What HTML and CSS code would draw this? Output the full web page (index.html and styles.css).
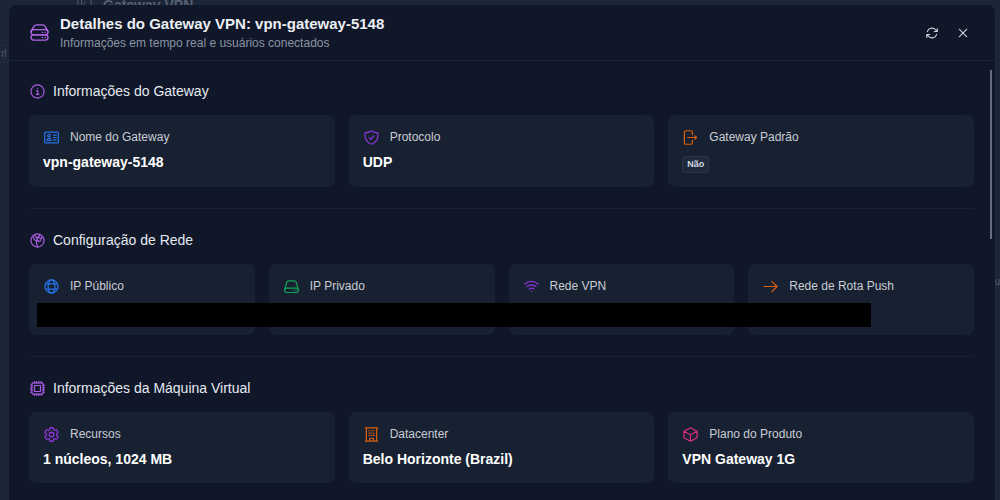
FILE: index.html
```html
<!DOCTYPE html>
<html lang="pt-BR">
<head>
<meta charset="utf-8">
<meta name="viewport" content="width=device-width, initial-scale=1">
<title>Detalhes do Gateway VPN</title>
<link rel="stylesheet" href="styles.css">
</head>
<body>
<div class="backdrop" aria-hidden="true">
  <div class="backdrop-title">
    <svg class="backdrop-icon" viewBox="0 0 16 16"><path d="M1 0v15M5 5v10M9 7l-2 4 3 4M15 0v15"/></svg>
    <span>Gateway VPN</span>
  </div>
  <span class="backdrop-chip">rl</span>
  <span class="backdrop-cell">u</span>
</div>
<main class="modal" role="dialog" aria-labelledby="title">
  <header class="modal-header">
    <svg class="icon brand-icon" viewBox="0 0 20 18"><path d="M1 8.500Q1 7.500 2 6L4 2.700Q5 1 7 1h6q2 0 3 1.700L18 6q1 1.500 1 2.500"/><rect x="1" y="6" width="18" height="5.500" rx="2.700"/><rect x="1" y="11.500" width="18" height="5.500" rx="2.700"/><path d="M13 8.800h.3M16 8.800h.3M13 14.300h.3M16 14.300h.3"/></svg>
    <div class="titles">
      <h1 id="title">Detalhes do Gateway VPN: vpn-gateway-5148</h1>
      <p>Informações em tempo real e usuários conectados</p>
    </div>
    <div class="actions">
      <button type="button" aria-label="Atualizar"><svg class="icon action-icon" viewBox="0 0 24 24"><path d="M16 9.300h5V4.300M3 19.700v-5h5M3 14.700l3.200 3.200a8.300 8.300 0 0 0 13.800-3.700M4 9.800a8.300 8.300 0 0 1 13.800-3.700L21 9.300"/></svg></button>
      <button type="button" aria-label="Fechar"><svg class="icon action-icon" viewBox="0 0 24 24"><path d="M5.500 5.500l13 13M18.500 5.500l-13 13"/></svg></button>
    </div>
  </header>
  <div class="modal-body">
    <section class="section">
      <h2><svg class="icon" viewBox="0 0 16 16"><circle cx="8" cy="8" r="7"/><path d="M7 7.300h1.200v3.800M6.800 11.100h2.700M8 4.800v.3"/></svg>Informações do Gateway</h2>
      <div class="cards">
        <article class="card">
          <h3><svg class="icon blue" viewBox="0 0 16 16"><rect x=".7" y="2.200" width="14.600" height="11.600" rx="1"/><circle cx="5.300" cy="6.100" r="1.400"/><path d="M3.200 11.200q0-2 2.100-2t2.100 2zM10 5.500h3M10 8h3M10 10.500h3"/></svg>Nome do Gateway</h3>
          <p class="value">vpn-gateway-5148</p>
        </article>
        <article class="card">
          <h3><svg class="icon purple" viewBox="0 0 16 16"><path d="M8 .8C6 2.200 3.500 3 1.200 3c-.8 5.500 1.300 10 6.800 12.200 5.500-2.200 7.600-6.700 6.800-12.200C12.500 3 10 2.200 8 .8zM5.600 8.200l1.700 1.700 3.100-3.600"/></svg>Protocolo</h3>
          <p class="value">UDP</p>
        </article>
        <article class="card">
          <h3><svg class="icon orange" viewBox="0 0 16 16"><path d="M10 5V2.200Q10 .8 8.600.8H3Q1.500.8 1.500 2.200v11.600q0 1.400 1.500 1.400h5.600q1.400 0 1.400-1.400V11M5 8h9.500M12.600 6.200L14.500 8l-1.900 1.800"/></svg>Gateway Padrão</h3>
          <p class="badge">Não</p>
        </article>
      </div>
    </section>
    <section class="section">
      <h2><svg class="icon" viewBox="0 0 16 16"><circle cx="8" cy="8" r="7"/><path d="M2.800 3.500l1.700 3.300L7 8.800v2.400l1 3.300M4.700 2.200l2.300 3 1.300-.8M10.300 1.700L9 4.700 7.300 7l1.900 2.200 2.200-1 .5-2.600-2-.4M13.200 4l-1.300 1.600M7 8.800L7.300 7"/></svg>Configuração de Rede</h2>
      <div class="cards">
        <article class="card">
          <h3><svg class="icon blue" viewBox="0 0 16 16"><circle cx="8" cy="8" r="7"/><ellipse cx="8" cy="8" rx="3.600" ry="7"/><path d="M1.800 5.200h12.400M1.800 10.800h12.400"/></svg>IP Público</h3>
        </article>
        <article class="card">
          <h3><svg class="icon green" viewBox="0 0 16 16"><path d="M.8 10.800L3 3.500Q3.500 2 5 2h6q1.500 0 2 1.500l2.200 7.300"/><rect x=".8" y="9.700" width="14.400" height="4.700" rx="2"/><path d="M10.300 12.100h.2M12.700 12.100h.2"/></svg>IP Privado</h3>
        </article>
        <article class="card">
          <h3><svg class="icon purple" viewBox="0 0 16 16"><path d="M.8 5.400q7.200-5.600 14.400 0M3.200 8.100q4.800-3.700 9.600 0M5.600 10.700q2.400-1.800 4.800 0M7.900 13.300h.2"/></svg>Rede VPN</h3>
        </article>
        <article class="card">
          <h3><svg class="icon orange" viewBox="0 0 16 16"><path d="M1 8h14M9.500 2.500L15 8l-5.500 5.500"/></svg>Rede de Rota Push</h3>
        </article>
        <div class="redaction"></div>
      </div>
    </section>
    <section class="section">
      <h2><svg class="icon" viewBox="0 0 16 16"><rect x="2" y="2" width="12" height="12" rx="1.500"/><rect x="4.800" y="4.800" width="6.400" height="6.400"/><path d="M4.500.6V2M7 .6V2M9.500.6V2M12 .6V2M4.500 14v1.400M7 14v1.400M9.500 14v1.400M12 14v1.400M.6 4.500H2M.6 7H2M.6 9.500H2M.6 12H2M14 4.500h1.400M14 7h1.400M14 9.500h1.400M14 12h1.400"/></svg>Informações da Máquina Virtual</h2>
      <div class="cards">
        <article class="card">
          <h3><svg class="icon purple" viewBox="2 2 20 20"><path class="wide" d="M9.600 3.900c.1-.5.500-.9 1.100-.9h2.600c.6 0 1 .4 1.100.9l.2 1.300c.1.400.3.700.6.900l.3.100c.3.200.7.200 1.100.1l1.200-.5c.5-.2 1.100 0 1.400.5l1.300 2.200c.3.500.2 1.100-.3 1.400l-1 .9c-.3.200-.4.600-.4 1v.4c0 .4.100.7.400 1l1 .8c.5.400.6 1 .3 1.500l-1.300 2.200c-.3.500-.9.700-1.400.5l-1.200-.5c-.4-.1-.8-.1-1.100.1l-.3.100c-.3.200-.5.500-.6.900l-.2 1.300c-.1.500-.5.900-1.100.9h-2.600c-.6 0-1-.4-1.100-.9l-.2-1.300c-.1-.4-.3-.7-.6-.9l-.3-.1c-.3-.2-.7-.2-1.100-.1l-1.200.5c-.5.200-1.100 0-1.400-.5l-1.300-2.200c-.3-.5-.2-1.100.3-1.500l1-.8c.3-.3.400-.6.400-1v-.4c0-.4-.1-.8-.4-1l-1-.9c-.5-.3-.6-.9-.3-1.400l1.300-2.200c.3-.5.900-.7 1.400-.5l1.200.5c.4.100.8.100 1.100-.1l.3-.1c.3-.2.500-.5.600-.9z"/><circle class="wide" cx="12" cy="12" r="3"/></svg>Recursos</h3>
          <p class="value">1 núcleos, 1024 MB</p>
        </article>
        <article class="card">
          <h3><svg class="icon orange" viewBox="0 0 16 16"><path d="M2.500 15V1M13.500 15V1M1.500 1h13M1.500 15h13M6 15v-3h4v3M5.300 4h.6M7.700 4h.6M10.100 4h.6M5.300 6.500h.6M7.700 6.500h.6M10.100 6.500h.6M5.300 9h.6M7.700 9h.6M10.100 9h.6"/></svg>Datacenter</h3>
          <p class="value">Belo Horizonte (Brazil)</p>
        </article>
        <article class="card">
          <h3><svg class="icon pink" viewBox="0 0 16 16"><path d="M8 .8l7 3.700v7L8 15.200l-7-3.700v-7zM1 4.500l7 3.800 7-3.800M8 8.300v6.900"/></svg>Plano do Produto</h3>
          <p class="value">VPN Gateway 1G</p>
        </article>
      </div>
    </section>
    <div class="scroll-thumb"></div>
  </div>
</main>
</body>
</html>
```
FILE: styles.css
```css
* { box-sizing: border-box; }
body {
  margin: 0;
  height: 100vh;
  overflow: hidden;
  display: flex;
  background: #1b2638;
  color: #e5e9f0;
  font-family: "Liberation Sans", Arial, sans-serif;
}
h1, h2, h3, p { margin: 0; }

.backdrop { position: absolute; inset: 0; overflow: hidden; color: #566072; }
.backdrop-title {
  position: absolute;
  left: 77px;
  top: -5px;
  display: flex;
  gap: 11px;
  font-size: 14px;
  line-height: 20px;
  font-weight: bold;
}
.backdrop-icon { width: 15px; height: 15px; fill: none; stroke: currentColor; }
.backdrop-chip {
  position: absolute;
  left: -8px;
  top: 45px;
  padding: 0 3px 0 8px;
  border: 1px solid #222e40;
  border-radius: 3px;
  font-size: 10px;
  line-height: 16px;
}
.backdrop-cell { position: absolute; right: 0; top: 275px; font-size: 10px; line-height: 14px; }

.modal {
  position: relative;
  flex: 1;
  min-width: 0;
  margin: 5px 5px 0 9px;
  display: flex;
  flex-direction: column;
  background: #0f1729;
  border-radius: 7px 7px 0 0;
}
.modal-header {
  display: flex;
  align-items: center;
  gap: 11px;
  padding: 8px 20px 8px 21px;
  border-bottom: 1px solid #1a2435;
}
.titles { flex: 1; }
h1 { font-size: 15px; line-height: 21px; color: #eceff4; }
.titles p { font-size: 12px; line-height: 18px; color: #8b94a3; }
.actions { display: flex; gap: 7px; }
button {
  width: 24px;
  height: 24px;
  padding: 0;
  display: grid;
  place-items: center;
  border: 0;
  background: none;
  color: #d1d5db;
}

.icon {
  flex: none;
  width: 15px;
  height: 15px;
  fill: none;
  stroke: currentColor;
  stroke-width: 1.3;
  stroke-linecap: round;
  stroke-linejoin: round;
}
.brand-icon { width: 19px; height: 17px; color: #b266ea; stroke-width: 1.4; }
.action-icon { width: 14px; height: 14px; stroke-width: 1.8; }
.wide { stroke-width: 1.7; }
.blue { color: #2672e8; }
.purple { color: #9035dc; }
.orange { color: #d95f0c; }
.green { color: #12a45c; }
.pink { color: #dc2d83; }

.modal-body { position: relative; flex: 1; min-height: 0; overflow: hidden; padding: 20px 21px 0 20px; }
.section + .section { margin-top: 21px; padding-top: 21px; border-top: 1px solid #182132; }
h2 {
  display: flex;
  align-items: center;
  gap: 8px;
  padding-left: 1px;
  margin-bottom: 14px;
  font-size: 14px;
  line-height: 20px;
  font-weight: normal;
}
h2 .icon { color: #a75ce0; }
.cards {
  position: relative;
  display: grid;
  grid-auto-flow: column;
  grid-auto-columns: minmax(0, 1fr);
  gap: 14px;
}
.card { min-height: 71px; padding: 14px; border-radius: 7px; background: #182131; }
h3 {
  display: flex;
  align-items: center;
  gap: 11px;
  padding-left: 1px;
  margin-bottom: 8px;
  font-size: 12px;
  line-height: 16px;
  font-weight: normal;
  color: #c9cdd5;
}
.value { font-size: 14px; line-height: 19px; font-weight: bold; color: #fff; }
.badge {
  width: max-content;
  margin-top: 11px;
  padding: 0 4px;
  border: 1px solid #283648;
  border-radius: 3px;
  background: #1e2a3b;
  font-size: 9px;
  line-height: 15px;
  font-weight: bold;
  color: #d5dae2;
}
.redaction { position: absolute; left: 8px; right: 103px; top: 39px; height: 24px; background: #000; }
.scroll-thumb { position: absolute; right: 3px; top: 9px; width: 2px; height: 169px; background: #687080; }
```
